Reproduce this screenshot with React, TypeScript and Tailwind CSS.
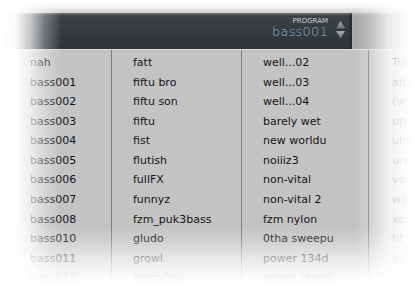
import React from 'react'

const col1 = ['nah', 'bass001', 'bass002', 'bass003', 'bass004', 'bass005', 'bass006', 'bass007', 'bass008', 'bass010', 'bass011', 'bass012']
const col2 = ['fatt', 'fiftu bro', 'fiftu son', 'fiftu', 'fist', 'flutish', 'fullFX', 'funnyz', 'fzm_puk3bass', 'gludo', 'growl', 'harm0nik']
const col3 = ['well...02', 'well...03', 'well...04', 'barely wet', 'new worldu', 'noiiiz3', 'non-vital', 'non-vital 2', 'fzm nylon', '0tha sweepu', 'power 134d', 'power chord']
// last column is cut by the window edge, only the visible part is kept
const col4 = ['Trin', 'afte', '(voic', 'unco', 'unfo', 'unt', 'venu', 'warn', 'xpl0', 'hf_', 'auto', 'no']

const Column = ({ items, className }: { items: string[]; className: string }) => (
  <div className={`flex flex-col pt-[3px] ${className}`}>
    {items.map((name) => (
      <div key={name} className="h-[20px] overflow-hidden whitespace-nowrap text-[11px] leading-[20px] text-[#141414]">
        {name}
      </div>
    ))}
  </div>
)

export default function App() {
  return (
    <div className="relative h-[288px] w-[418px] overflow-hidden bg-[#c3c3c3] font-['DejaVu_Sans',sans-serif]">
      <div className="h-[13px] bg-[#c6c6c6]" />

      {/* program header */}
      <div className="flex h-[36px]">
        <div className="flex w-[349px] shrink-0 items-start justify-end border-t border-[#4b5255] bg-gradient-to-b from-[#3c4346] to-[#2c3235] pt-[3px] pr-[4px]">
          <div className="flex flex-col items-end">
            <span className="text-[7px] leading-[8px] text-[#cfd3d5]">PROGRAM</span>
            <span className="text-[13px] leading-[14px] font-light tracking-[0.2px] text-[#8fb0cf]">bass001</span>
          </div>
          <svg width="9" height="18" viewBox="0 0 9 18" className="mt-[4px] ml-[8px]">
            <defs>
              <linearGradient id="arr" x1="0" y1="0" x2="0" y2="1">
                <stop offset="0" stopColor="#a3a9ac" />
                <stop offset="1" stopColor="#6c7275" />
              </linearGradient>
            </defs>
            <polygon points="0,7.5 4.5,0 9,7.5" fill="url(#arr)" />
            <polygon points="0,10 9,10 4.5,17.5" fill="url(#arr)" />
          </svg>
        </div>
        <div className="w-[3px] shrink-0 bg-[#2b2d2e]" />
        <div className="flex-1 bg-[#a9a9a9]" />
      </div>
      <div className="h-px bg-[#dcdcdc]" />

      {/* preset list */}
      <div className="flex h-[238px]">
        <Column items={col1} className="w-[111px] shrink-0 pl-[30px]" />
        <Column items={col2} className="w-[130px] shrink-0 border-l border-[#7c7c7c] pl-[21px]" />
        <Column items={col3} className="w-[127px] shrink-0 border-l border-[#7c7c7c] pl-[21px]" />
        <Column items={col4} className="min-w-0 flex-1 border-l border-[#7c7c7c] pl-[23px]" />
      </div>

      {/* vignette */}
      <div className="pointer-events-none absolute inset-x-0 top-0 h-[16px] bg-[linear-gradient(to_bottom,white_0px,rgba(255,255,255,0.85)_6px,rgba(255,255,255,0.3)_12px,transparent_16px)]" />
      <div className="pointer-events-none absolute inset-y-0 left-0 w-[62px] bg-[linear-gradient(to_right,white_0px,rgba(255,255,255,0.97)_16px,rgba(255,255,255,0.72)_30px,rgba(255,255,255,0.3)_45px,transparent_62px)]" />
      <div className="pointer-events-none absolute inset-y-0 right-0 w-[62px] bg-[linear-gradient(to_left,white_0px,rgba(255,255,255,0.97)_10px,rgba(255,255,255,0.75)_30px,rgba(255,255,255,0.25)_48px,transparent_62px)]" />
      <div className="pointer-events-none absolute inset-x-0 bottom-0 h-[62px] bg-[linear-gradient(to_top,white_0px,rgba(255,255,255,0.95)_10px,rgba(255,255,255,0.65)_28px,rgba(255,255,255,0.2)_48px,transparent_62px)]" />
    </div>
  )
}
